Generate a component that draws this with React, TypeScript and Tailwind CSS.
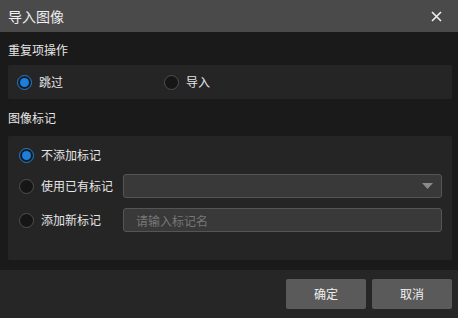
import { useState } from "react";

function Radio({ checked }: { checked: boolean }) {
  return checked ? (
    <span className="flex h-[15px] w-[15px] items-center justify-center rounded-full border-[1.5px] border-[#1b7fe0] bg-[#1a1a1a]">
      <span className="h-[9px] w-[9px] rounded-full bg-[#1b7fe0]" />
    </span>
  ) : (
    <span className="h-[15px] w-[15px] rounded-full border border-[#4f4f4f] bg-[#161616]" />
  );
}

export default function App() {
  const [dup, setDup] = useState("skip");
  const [mark, setMark] = useState("none");

  return (
    <div
      className="flex h-[318px] w-[458px] flex-col bg-[#1a1a1a] text-[12px] text-[#e6e6e6]"
      style={{ fontFamily: '"Noto Sans CJK SC", "Noto Sans", sans-serif' }}
    >
      <div className="flex h-[32px] items-center justify-between bg-[#4a4a4a] pl-[8px] pr-[16px]">
        <span className="text-[14px] text-[#f0f0f0]">导入图像</span>
        <svg width="11" height="11" viewBox="0 0 11 11" className="text-[#eeeeee]">
          <path d="M1 1 L10 10 M10 1 L1 10" stroke="currentColor" strokeWidth="1.6" />
        </svg>
      </div>

      <div className="flex flex-1 flex-col pl-[8px] pr-[6px]">
        <div className="flex h-[33px] items-center pt-[2px]">重复项操作</div>
        <div className="flex h-[34px] items-center rounded-[2px] bg-[#252525] pl-[9px]">
          <button className="flex w-[147px] items-center gap-[7px]" onClick={() => setDup("skip")}>
            <Radio checked={dup === "skip"} />
            <span>跳过</span>
          </button>
          <button className="flex items-center gap-[7px]" onClick={() => setDup("import")}>
            <Radio checked={dup === "import"} />
            <span>导入</span>
          </button>
        </div>

        <div className="flex h-[37px] items-center">图像标记</div>
        <div className="flex h-[124px] flex-col rounded-[2px] bg-[#252525] pl-[11px] pr-[10px] pt-[8px]">
          <button className="flex h-[22px] items-center gap-[7px]" onClick={() => setMark("none")}>
            <Radio checked={mark === "none"} />
            <span>不添加标记</span>
          </button>
          <div className="mt-[8px] flex h-[24px] items-center">
            <button className="flex w-[104px] items-center gap-[7px]" onClick={() => setMark("existing")}>
              <Radio checked={mark === "existing"} />
              <span>使用已有标记</span>
            </button>
            <div className="flex h-[24px] flex-1 items-center justify-end rounded-[3px] border border-[#555555] bg-[#393939] pr-[8px]">
              <svg width="11" height="6" viewBox="0 0 11 6">
                <path d="M0 0 H11 L5.5 6 Z" fill="#8a8a8a" />
              </svg>
            </div>
          </div>
          <div className="mt-[10px] flex h-[24px] items-center">
            <button className="flex w-[104px] items-center gap-[7px]" onClick={() => setMark("new")}>
              <Radio checked={mark === "new"} />
              <span>添加新标记</span>
            </button>
            <input
              className="h-[24px] flex-1 rounded-[3px] border border-[#555555] bg-[#393939] px-[12px] text-[12px] text-[#e6e6e6] outline-none placeholder:text-[#777777]"
              placeholder="请输入标记名"
            />
          </div>
        </div>
      </div>

      <div className="mt-[10px] flex h-[48px] items-center justify-end gap-[6px] bg-[#262626] pr-[6px]">
        <button className="h-[30px] w-[80px] rounded-[2px] bg-[#5a5a5a] text-[#f0f0f0]">确定</button>
        <button className="h-[30px] w-[80px] rounded-[2px] bg-[#5a5a5a] text-[#f0f0f0]">取消</button>
      </div>
    </div>
  );
}
